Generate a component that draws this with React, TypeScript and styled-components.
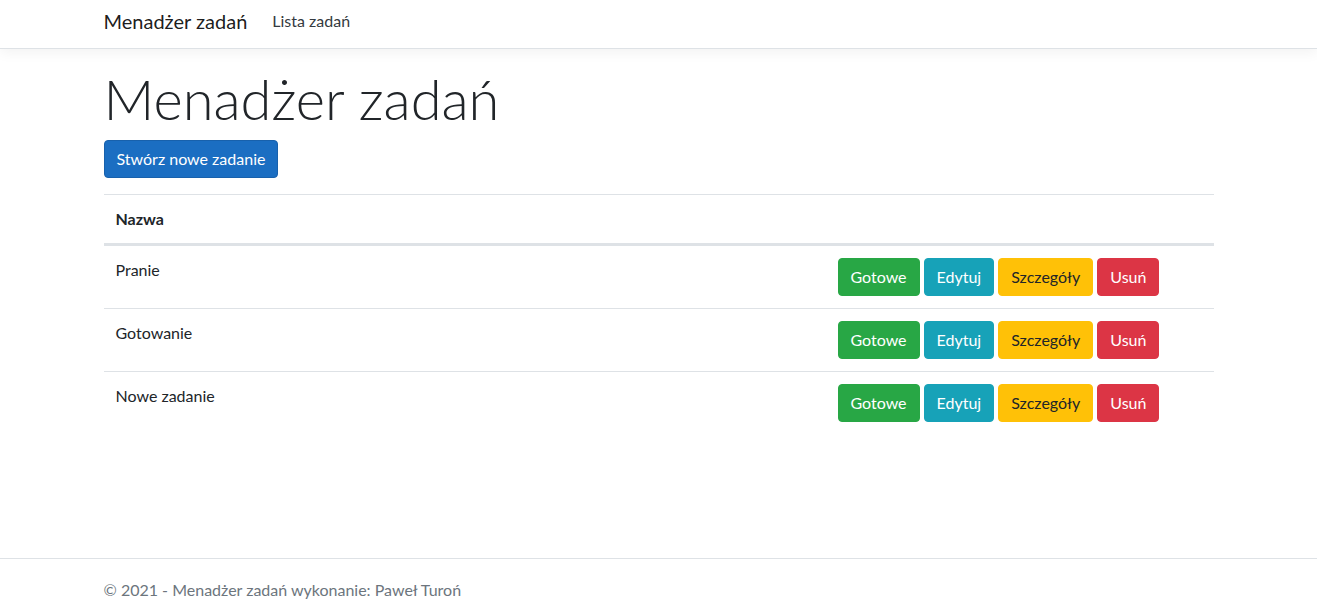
import React from "react";
import styled, { createGlobalStyle } from "styled-components";

const Global = createGlobalStyle`
  html, body { margin: 0; padding: 0; }
  body {
    font-family: "Lato", "Noto Sans", "Liberation Sans", sans-serif;
    font-size: 16px;
    line-height: 1.5;
    color: #212529;
    background: #fff;
  }
  * { box-sizing: border-box; }
`;

const Page = styled.div`
  height: 613px;
  display: flex;
  flex-direction: column;
  overflow: hidden;
`;

const Navbar = styled.header`
  background: #fff;
  border-bottom: 1px solid #dee2e6;
  box-shadow: 0 4px 12px rgba(0, 0, 0, 0.05);
  margin-bottom: 16px;
`;

const Container = styled.div`
  width: 1140px;
  margin: 0 auto;
  padding: 0 15px;
`;

const NavInner = styled(Container)`
  display: flex;
  align-items: flex-start;
  height: 48px;
  padding-top: 6px;
`;

const Brand = styled.a`
  font-size: 20px;
  line-height: 30px;
  color: rgba(0, 0, 0, 0.9);
  margin-right: 17px;
  text-decoration: none;
`;

const NavLink = styled.a`
  padding: 3px 8px;
  color: #343a40;
  text-decoration: none;
  font-size: 16px;
  line-height: 24px;
`;

const Main = styled.main`
  padding-bottom: 16px;
`;

const Title = styled.h1`
  font-size: 56px;
  font-weight: 300;
  line-height: 1.2;
  margin: 0 0 8px;
`;

const Para = styled.p`
  margin: 0 0 16px;
`;

type Variant = "primary" | "success" | "info" | "warning" | "danger";

const palette: Record<Variant, { bg: string; border: string; color: string }> = {
  primary: { bg: "#1b6ec2", border: "#1861ac", color: "#fff" },
  success: { bg: "#28a745", border: "#28a745", color: "#fff" },
  info: { bg: "#17a2b8", border: "#17a2b8", color: "#fff" },
  warning: { bg: "#ffc107", border: "#ffc107", color: "#212529" },
  danger: { bg: "#dc3545", border: "#dc3545", color: "#fff" },
};

const Button = styled.a<{ $variant: Variant }>`
  display: inline-block;
  padding: 6px 12px;
  font-size: 16px;
  line-height: 24px;
  border-radius: 4px;
  border: 1px solid ${(p) => palette[p.$variant].border};
  background: ${(p) => palette[p.$variant].bg};
  color: ${(p) => palette[p.$variant].color};
  text-decoration: none;
  white-space: nowrap;
`;

const Table = styled.div`
  width: 100%;
`;

const Row = styled.div<{ $head?: boolean }>`
  display: grid;
  grid-template-columns: 1fr 388px;
  border-top: 1px solid #dee2e6;
  border-bottom: ${(p) => (p.$head ? "2px solid #dee2e6" : "none")};
`;

const Cell = styled.div<{ $head?: boolean }>`
  padding: 12px;
  font-weight: ${(p) => (p.$head ? 700 : 400)};
  line-height: 24px;
`;

const Actions = styled(Cell)`
  display: flex;
  gap: 4px;
`;

const Footer = styled.footer`
  margin-top: auto;
  border-top: 1px solid #dee2e6;
  height: 55px;
  line-height: 62px;
  color: #6c757d;
  white-space: nowrap;
  overflow: hidden;
`;

const tasks = ["Pranie", "Gotowanie", "Nowe zadanie"];

export default function App() {
  return (
    <Page>
      <Global />
      <Navbar>
        <NavInner>
          <Brand href="#">Menadżer zadań</Brand>
          <NavLink href="#">Lista zadań</NavLink>
        </NavInner>
      </Navbar>
      <Container>
        <Main>
          <Title>Menadżer zadań</Title>
          <Para>
            <Button $variant="primary" href="#">Stwórz nowe zadanie</Button>
          </Para>
          <Table>
            <Row $head>
              <Cell $head>Nazwa</Cell>
              <Cell $head />
            </Row>
            {tasks.map((t) => (
              <Row key={t}>
                <Cell>{t}</Cell>
                <Actions>
                  <Button $variant="success" href="#">Gotowe</Button>
                  <Button $variant="info" href="#">Edytuj</Button>
                  <Button $variant="warning" href="#">Szczegóły</Button>
                  <Button $variant="danger" href="#">Usuń</Button>
                </Actions>
              </Row>
            ))}
          </Table>
        </Main>
      </Container>
      <Footer>
        <Container>© 2021 - Menadżer zadań wykonanie: Paweł Turoń</Container>
      </Footer>
    </Page>
  );
}
